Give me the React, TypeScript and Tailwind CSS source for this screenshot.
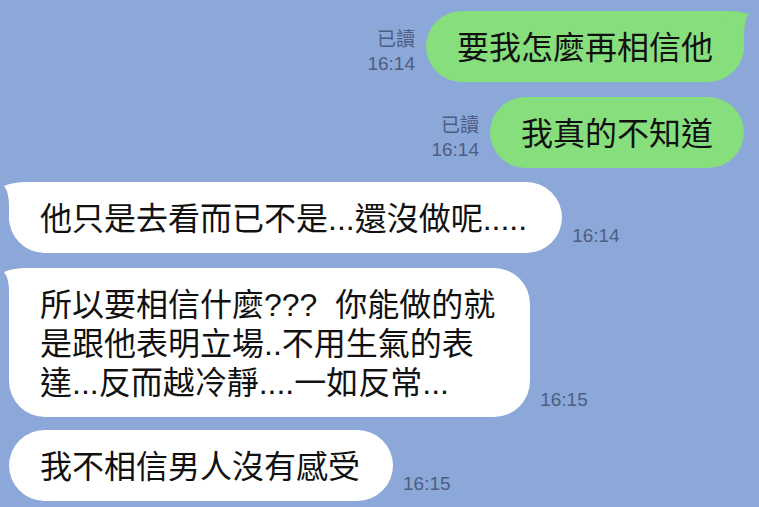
import React from "react";

const FONT = { fontFamily: '"Liberation Sans", "Noto Sans CJK TC", sans-serif' };

function GreenTail() {
  return (
    <svg
      className="absolute right-[-6px] top-0"
      width="40"
      height="40"
      viewBox="0 0 40 40"
    >
      <path d="M0 0 H16 Q30 0 39 3 Q34 9 34 24 V40 H0 Z" fill="#86df7c" />
    </svg>
  );
}

function WhiteTail() {
  return (
    <svg
      className="absolute left-[-6px] top-0"
      width="40"
      height="40"
      viewBox="0 0 40 40"
    >
      <path d="M40 0 H24 Q10 0 1 4 Q6 10 6 24 V40 H40 Z" fill="#ffffff" />
    </svg>
  );
}

function SentRow({ text, tail, className }: { text: string; tail?: boolean; className?: string }) {
  return (
    <div className={`flex items-end justify-end pr-[15px] ${className ?? ""}`}>
      <div className="mr-[11px] pb-[6px] text-right text-[19px] leading-[24px] text-[#4d5e82]">
        <div>已讀</div>
        <div>16:14</div>
      </div>
      <div className="relative">
        {tail && <GreenTail />}
        <div className="relative rounded-[36px] bg-[#86df7c] px-[31px] pt-[18px] pb-[14px] text-[32px] leading-[39px] text-[#111] whitespace-pre">
          {text}
        </div>
      </div>
    </div>
  );
}

function RecvRow({
  lines,
  time,
  tail,
  className,
  padRight,
}: {
  lines: string[];
  time: string;
  tail?: boolean;
  className?: string;
  padRight?: string;
}) {
  return (
    <div className={`flex items-end justify-start pl-[9px] ${className ?? ""}`}>
      <div className="relative">
        {tail && <WhiteTail />}
        <div
          className={`relative rounded-[36px] bg-white pl-[31px] ${padRight ?? "pr-[31px]"} pt-[18px] pb-[14px] text-[32px] leading-[39px] text-[#111] whitespace-pre`}
        >
          {lines.map((l, i) => (
            <div key={i}>{l}</div>
          ))}
        </div>
      </div>
      <div className="ml-[10px] pb-[5px] text-[19px] leading-[24px] text-[#4d5e82]">{time}</div>
    </div>
  );
}

export default function App() {
  return (
    <div className="h-[507px] w-full overflow-hidden bg-[#8ba8d8] pt-[11px]" style={FONT}>
      <div className="flex flex-col">
        <SentRow text="要我怎麼再相信他" tail />
        <SentRow text="我真的不知道" className="mt-[15px]" />
        <RecvRow
          lines={["他只是去看而已不是...還沒做呢....."]}
          time="16:14"
          tail
          padRight="pr-[35px]"
          className="mt-[14px]"
        />
        <RecvRow
          lines={["所以要相信什麼???  你能做的就", "是跟他表明立場..不用生氣的表", "達...反而越冷靜....一如反常..."]}
          time="16:15"
          tail
          padRight="pr-[35px]"
          className="mt-[15px]"
        />
        <RecvRow lines={["我不相信男人沒有感受"]} time="16:15" padRight="pr-[33px]" className="mt-[13px]" />
      </div>
    </div>
  );
}
